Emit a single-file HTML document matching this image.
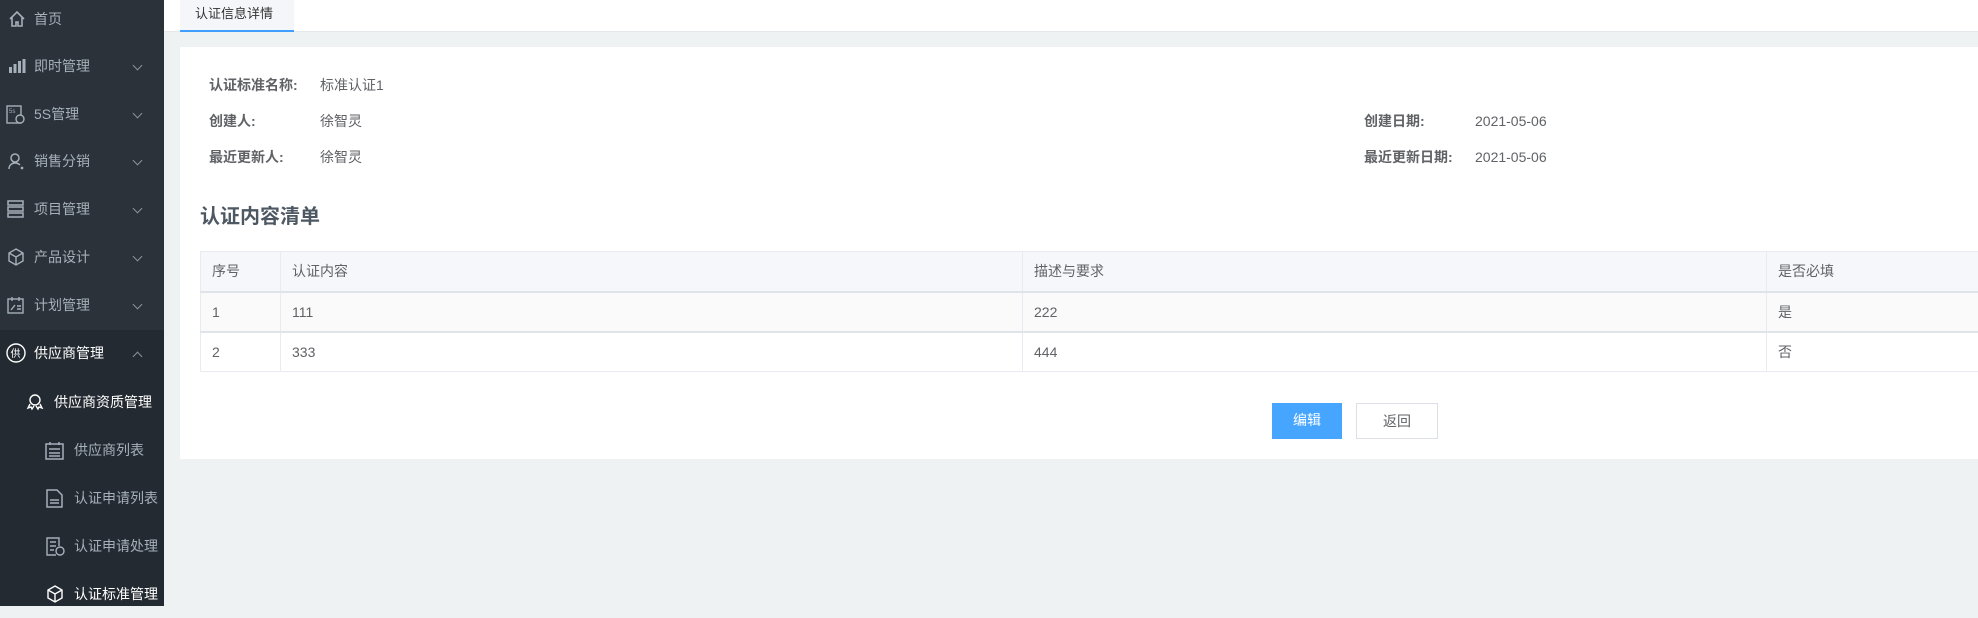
<!DOCTYPE html>
<html><head><meta charset="utf-8"><style>
*{margin:0;padding:0;box-sizing:border-box}
body{width:1978px;height:606px;overflow:hidden;background:#eff2f3;font-family:"Liberation Sans","Noto Sans CJK SC",sans-serif;position:relative}
.side{position:absolute;left:0;top:0;width:164px;height:606px;background:#2b3239}
.dark{position:absolute;left:0;top:330px;width:164px;height:276px;background:#232a31}
.mi{position:absolute;left:0;width:164px;height:48px;line-height:48px;color:#a6b0ba;font-size:14px}
.mi svg{position:absolute;top:15px}
.mi .t{position:absolute}
.chev{position:absolute;left:134px;top:20px;width:7px;height:7px;border-right:1px solid #8a939c;border-bottom:1px solid #8a939c;transform:rotate(45deg)}
.chev.up{transform:rotate(-135deg);top:24px}
.top{position:absolute;left:164px;top:0;right:0;height:32px;background:#fff;border-bottom:1px solid #e6e9ec}
.tab{position:absolute;left:180px;top:0;width:114px;height:32px;background:#f4f6f9;color:#333;font-size:13px;line-height:28px;padding-left:15px;border-bottom:2px solid #409eff}
.card{position:absolute;left:180px;top:47px;right:0;height:412px;background:#fff}
.lab{position:absolute;color:#606266;font-size:14px;font-weight:bold;transform:translateY(-50%)}
.val{position:absolute;color:#606266;font-size:14px;transform:translateY(-50%)}
h2{position:absolute;left:200px;top:200px;font-size:20px;color:#4d5862;font-weight:bold}
table{position:absolute;left:200px;top:251px;width:1800px;border-collapse:collapse;font-size:14px;color:#606266}
td{border:1px solid #e8ebef;height:40px;padding-left:11px}
tr.h td{background:#f5f7fa;border-bottom:2px solid #dfe4ea}
tr.r1 td{background:#fafafa;border-bottom:2px solid #e0e4e8}
.btn{position:absolute;top:403px;height:36px;font-size:14px;text-align:center;line-height:34px}
</style></head><body>
<div class="side"></div><div class="dark"></div>
<div class="mi" style="top:-5px"><svg style="left:8px" width="18" height="18" viewBox="0 0 18 18" fill="none" stroke="#a6b0ba" stroke-width="1.6"><path d="M2 9L9 2l7 7M4 7v9h4v-4h2v4h4V7"/></svg><span class="t" style="left:34px">首页</span></div>
<div class="mi" style="top:42px"><svg style="left:8px" width="18" height="18" viewBox="0 0 18 18" fill="#a6b0ba"><rect x="1" y="10" width="3" height="6"/><rect x="5.5" y="7" width="3" height="9"/><rect x="10" y="4" width="3" height="12"/><rect x="14.5" y="2" width="3" height="14"/></svg><span class="t" style="left:34px">即时管理</span><i class="chev"></i></div>
<div class="mi" style="top:90px"><svg style="left:6px" width="20" height="20" viewBox="0 0 20 20" fill="none" stroke="#a6b0ba" stroke-width="1.4"><rect x="1" y="1" width="14" height="17"/><circle cx="14" cy="14" r="4" fill="#2b3239"/><text x="3" y="8" font-size="6" fill="#a6b0ba" stroke="none">5s</text></svg><span class="t" style="left:34px">5S管理</span><i class="chev"></i></div>
<div class="mi" style="top:137px"><svg style="left:7px" width="18" height="18" viewBox="0 0 18 18" fill="none" stroke="#a6b0ba" stroke-width="1.5"><circle cx="8" cy="6" r="4"/><path d="M2 17c0-4 3-6 6-6s4 1 5 2"/><circle cx="15" cy="16" r=".6"/></svg><span class="t" style="left:34px">销售分销</span><i class="chev"></i></div>
<div class="mi" style="top:185px"><svg style="left:7px" width="18" height="18" viewBox="0 0 18 18" fill="none" stroke="#a6b0ba" stroke-width="1.5"><rect x="1" y="1" width="15" height="4"/><rect x="1" y="7" width="15" height="4"/><rect x="1" y="13" width="15" height="4"/></svg><span class="t" style="left:34px">项目管理</span><i class="chev"></i></div>
<div class="mi" style="top:233px"><svg style="left:7px" width="18" height="18" viewBox="0 0 18 18" fill="none" stroke="#a6b0ba" stroke-width="1.4"><path d="M9 1l7 4v8l-7 4-7-4V5zM2 5l7 4 7-4M9 9v8"/></svg><span class="t" style="left:34px">产品设计</span><i class="chev"></i></div>
<div class="mi" style="top:281px"><svg style="left:7px" width="18" height="18" viewBox="0 0 18 18" fill="none" stroke="#a6b0ba" stroke-width="1.4"><rect x="1" y="3" width="15" height="14"/><path d="M5 1v4M12 1v4M4 14l4-5M10 10h4M10 13h4"/></svg><span class="t" style="left:34px">计划管理</span><i class="chev"></i></div>
<div class="mi" style="top:329px;color:#fff"><svg style="left:5px;top:13px" width="22" height="22" viewBox="0 0 22 22" fill="none" stroke="#fff" stroke-width="1.4"><circle cx="11" cy="11" r="9"/><text x="5.5" y="15" font-size="10" fill="#fff" stroke="none">供</text></svg><span class="t" style="left:34px">供应商管理</span><i class="chev up"></i></div>
<div class="mi" style="top:378px;color:#fff"><svg style="left:26px" width="18" height="18" viewBox="0 0 18 18" fill="none" stroke="#fff" stroke-width="1.4"><circle cx="9" cy="7" r="5"/><path d="M4 11l-2 4 3-1 1 2 2-3M14 11l2 4-3-1-1 2-2-3"/></svg><span class="t" style="left:54px">供应商资质管理</span></div>
<div class="mi" style="top:426px"><svg style="left:45px" width="19" height="19" viewBox="0 0 19 19" fill="none" stroke="#a6b0ba" stroke-width="1.5"><rect x="1" y="3" width="17" height="15"/><path d="M5 1v3M14 1v3M4 8h11M4 12h11M4 15h11"/></svg><span class="t" style="left:74px">供应商列表</span></div>
<div class="mi" style="top:474px"><svg style="left:46px" width="17" height="19" viewBox="0 0 17 19" fill="none" stroke="#a6b0ba" stroke-width="1.5"><path d="M1 1h10l5 5v12H1zM4 11h9M4 14h9"/></svg><span class="t" style="left:74px">认证申请列表</span></div>
<div class="mi" style="top:522px"><svg style="left:46px" width="19" height="19" viewBox="0 0 19 19" fill="none" stroke="#a6b0ba" stroke-width="1.4"><path d="M13 9V1H1v17h9M4 5h6M4 9h6M4 13h4"/><circle cx="14" cy="14" r="4"/></svg><span class="t" style="left:74px">认证申请处理</span></div>
<div class="mi" style="top:570px;color:#fff"><svg style="left:46px" width="18" height="18" viewBox="0 0 18 18" fill="none" stroke="#fff" stroke-width="1.4"><path d="M9 1l7 4v8l-7 4-7-4V5zM2 5l7 4 7-4M9 9v8"/></svg><span class="t" style="left:74px">认证标准管理</span></div>

<div class="top"></div>
<div class="tab">认证信息详情</div>
<div class="card"></div>
<div class="lab" style="left:209px;top:85px">认证标准名称:</div><div class="val" style="left:320px;top:85px">标准认证1</div>
<div class="lab" style="left:209px;top:121px">创建人:</div><div class="val" style="left:320px;top:121px">徐智灵</div>
<div class="lab" style="left:209px;top:157px">最近更新人:</div><div class="val" style="left:320px;top:157px">徐智灵</div>
<div class="lab" style="left:1364px;top:121px">创建日期:</div><div class="val" style="left:1475px;top:121px">2021-05-06</div>
<div class="lab" style="left:1364px;top:157px">最近更新日期:</div><div class="val" style="left:1475px;top:157px">2021-05-06</div>
<h2>认证内容清单</h2>
<table>
<tr class="h"><td style="width:80px">序号</td><td style="width:742px">认证内容</td><td style="width:744px">描述与要求</td><td>是否必填</td></tr>
<tr class="r1"><td>1</td><td>111</td><td>222</td><td>是</td></tr>
<tr><td>2</td><td>333</td><td>444</td><td>否</td></tr>
</table>
<div class="btn" style="left:1272px;width:70px;background:#46a6ff;color:#fff">编辑</div>
<div class="btn" style="left:1356px;width:82px;border:1px solid #dcdfe6;color:#606266;background:#fff">返回</div>
</body></html>
